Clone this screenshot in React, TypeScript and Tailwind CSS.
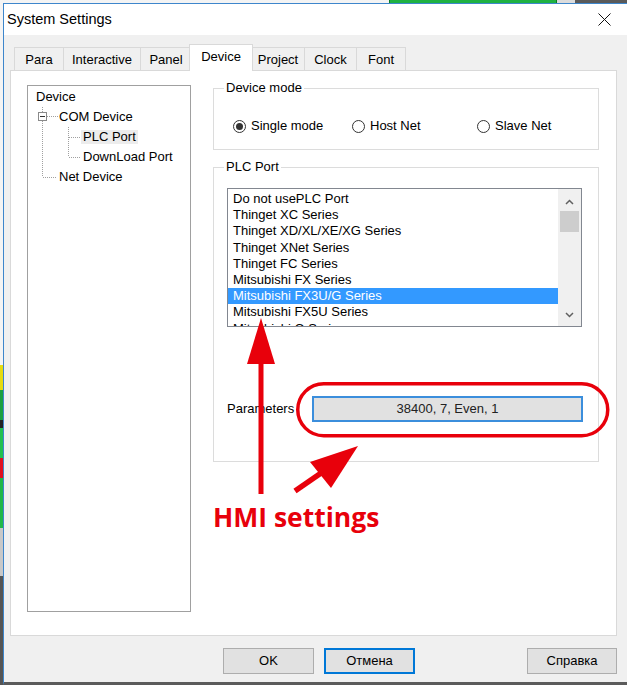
import React from "react";

const items = [
  "Do not usePLC Port",
  "Thinget XC Series",
  "Thinget XD/XL/XE/XG Series",
  "Thinget XNet Series",
  "Thinget FC Series",
  "Mitsubishi FX Series",
  "Mitsubishi FX3U/G Series",
  "Mitsubishi FX5U Series",
  "Mitsubishi Q Series",
];

function Radio({ checked, label, w }: { checked?: boolean; label: string; w: string }) {
  return (
    <div className={`flex items-center gap-[5px] ${w}`}>
      <span className="w-[13px] h-[13px] rounded-full border border-[#333] bg-white flex items-center justify-center shrink-0">
        {checked && <span className="w-[7px] h-[7px] rounded-full bg-[#333]" />}
      </span>
      <span className="leading-[16px]">{label}</span>
    </div>
  );
}

function Dots({ w, segs }: { w: number; segs: Array<[number, number, number, number]> }) {
  return (
    <svg width={w} height={20} className="shrink-0" shapeRendering="crispEdges">
      {segs.map((s, i) => (
        <line key={i} x1={s[0]} y1={s[1]} x2={s[2]} y2={s[3]} stroke="#a0a0a0" strokeWidth={1} strokeDasharray="1 1" />
      ))}
    </svg>
  );
}

export default function App() {
  return (
    <div className="relative w-[627px] h-[685px] overflow-hidden flex flex-col bg-[#f0f0f0] text-[13px] text-black font-['Liberation_Sans','Arial',sans-serif]">
      {/* desktop strip at top */}
      <div className="flex h-[3px] shrink-0">
        <div className="w-[389px] bg-[#f4f4f4]" />
        <div className="w-[168px] bg-[#1fb141] border-x border-[#0a7a20]" />
        <div className="w-[18px] bg-[#dcdcdc]" />
        <div className="flex-1 bg-[#5a5a5a]" />
      </div>
      <div className="flex flex-1 min-h-0">
        {/* desktop strip at left */}
        <div className="w-[3px] flex flex-col shrink-0">
          <div className="h-[362px] bg-[#f4f4f4]" />
          <div className="h-[25px] bg-[#e6dc10]" />
          <div className="h-[30px] bg-[#1aa040]" />
          <div className="h-[8px] bg-[#222]" />
          <div className="h-[30px] bg-[#22c050]" />
          <div className="h-[20px] bg-[#e01020]" />
          <div className="h-[50px] bg-[#20b84a]" />
          <div className="h-[48px] bg-[#c8c8c8]" />
          <div className="flex-1 bg-[#555]" />
        </div>
        {/* window */}
        <div className="flex-1 flex flex-col border-l border-t border-[#3d86cc] border-b-[3px] border-b-[#5b5b5b] bg-[#f0f0f0]">
          <div className="h-[31px] shrink-0 bg-white flex items-center pl-[3px] text-[14.5px]">
            <span>System Settings</span>
            <svg width="13" height="13" className="ml-auto mr-[16px]" viewBox="0 0 13 13">
              <path d="M0.5 0.5 L12.5 12.5 M12.5 0.5 L0.5 12.5" stroke="#111" strokeWidth="1" fill="none" />
            </svg>
          </div>
          <div className="flex-1 flex flex-col pt-[9px] pl-[6px]">
            {/* tabs */}
            <div className="h-[26px] flex items-end pl-[4px]">
              {[
                ["Para", "w-[50px]"],
                ["Interactive", "w-[78px]"],
                ["Panel", "w-[52px]"],
              ].map(([t, w]) => (
                <div key={t} className={`${w} h-[23px] -mr-px border-t border-x border-[#d9d9d9] bg-[#f0f0f0] flex items-center justify-center leading-none`}>
                  {t}
                </div>
              ))}
              <div className="relative z-10 w-[64px] h-[27px] -mx-[2px] -mb-px border-t border-x border-[#d9d9d9] bg-white flex items-start justify-center pt-[5px] leading-none">
                Device
              </div>
              {[
                ["Project", "w-[54px]"],
                ["Clock", "w-[53px]"],
                ["Font", "w-[50px]"],
              ].map(([t, w]) => (
                <div key={t} className={`${w} h-[23px] -mr-px border-t border-x border-[#d9d9d9] bg-[#f0f0f0] flex items-center justify-center leading-none`}>
                  {t}
                </div>
              ))}
            </div>
            {/* panel */}
            <div className="w-[607px] h-[566px] border border-[#d9d9d9] bg-white flex items-start">
              {/* tree */}
              <div className="ml-[16px] mt-[14px] w-[164px] h-[527px] border border-[#a0a0a0] pt-[1px] flex flex-col shrink-0">
                <div className="h-[20px] flex items-center pl-[8px]">Device</div>
                <div className="h-[20px] flex items-center">
                  <svg width={31} height={20} className="shrink-0" shapeRendering="crispEdges">
                    <line x1={14.5} y1={0} x2={14.5} y2={5} stroke="#a0a0a0" strokeDasharray="1 1" />
                    <rect x={10.5} y={5.5} width={8} height={8} fill="white" stroke="#8a8a8a" />
                    <line x1={12} y1={9.5} x2={17} y2={9.5} stroke="#333" />
                    <line x1={14.5} y1={14} x2={14.5} y2={20} stroke="#a0a0a0" strokeDasharray="1 1" />
                    <line x1={19} y1={9.5} x2={30} y2={9.5} stroke="#a0a0a0" strokeDasharray="1 1" />
                  </svg>
                  <span>COM Device</span>
                </div>
                <div className="h-[20px] flex items-center">
                  <Dots
                    w={53}
                    segs={[
                      [14.5, 0, 14.5, 20],
                      [40.5, 0, 40.5, 20],
                      [41, 10.5, 52, 10.5],
                    ]}
                  />
                  <span className="bg-[#ececec] px-[2px] leading-[14px]">PLC Port</span>
                </div>
                <div className="h-[20px] flex items-center">
                  <Dots
                    w={55}
                    segs={[
                      [14.5, 0, 14.5, 20],
                      [40.5, 0, 40.5, 10],
                      [41, 10.5, 53, 10.5],
                    ]}
                  />
                  <span>DownLoad Port</span>
                </div>
                <div className="h-[20px] flex items-center">
                  <Dots
                    w={31}
                    segs={[
                      [14.5, 0, 14.5, 10],
                      [15, 10.5, 29, 10.5],
                    ]}
                  />
                  <span>Net Device</span>
                </div>
              </div>
              {/* right column */}
              <div className="ml-[22px] w-[386px] flex flex-col shrink-0">
                <fieldset className="mt-[9px] h-[70px] border border-[#dcdcdc]">
                  <legend className="ml-[10px] px-[2px] leading-[16px]">Device mode</legend>
                  <div className="mt-[22px] h-[16px] flex items-center pl-[19px]">
                    <Radio checked label="Single mode" w="w-[119px]" />
                    <Radio label="Host Net" w="w-[125px]" />
                    <Radio label="Slave Net" w="w-[100px]" />
                  </div>
                </fieldset>
                <fieldset className="mt-[9px] h-[303px] border border-[#dcdcdc]">
                  <legend className="ml-[10px] px-[2px] leading-[16px]">PLC Port</legend>
                  <div className="mt-[13px] ml-[13px] w-[355px] h-[139px] border border-[#828790] flex overflow-hidden">
                    <div className="w-[330px] pt-[2px] flex flex-col overflow-hidden">
                      {items.map((t, i) => (
                        <div
                          key={t}
                          className={`h-[16.2px] leading-[16.2px] px-[5px] whitespace-nowrap shrink-0 ${
                            i === 6 ? "bg-[#3399ff] text-white" : ""
                          }`}
                        >
                          {t}
                        </div>
                      ))}
                    </div>
                    <div className="w-[23px] bg-[#f0f0f0] flex flex-col">
                      <div className="h-[22px] flex items-center justify-center pt-[3px]">
                        <svg width="9" height="6" viewBox="0 0 9 6">
                          <path d="M1 5 L4.5 1.5 L8 5" stroke="#606060" strokeWidth="1.5" fill="none" />
                        </svg>
                      </div>
                      <div className="h-[21px] mx-[2px] bg-[#cdcdcd]" />
                      <div className="flex-1" />
                      <div className="h-[22px] flex items-center justify-center">
                        <svg width="9" height="6" viewBox="0 0 9 6">
                          <path d="M1 1 L4.5 4.5 L8 1" stroke="#606060" strokeWidth="1.5" fill="none" />
                        </svg>
                      </div>
                    </div>
                  </div>
                  <div className="mt-[69px] ml-[13px] flex items-center">
                    <span className="w-[85px]">Parameters</span>
                    <div className="w-[271px] h-[26px] border-2 border-[#3b8edc] bg-[#e1e1e1] flex items-center justify-center text-[#222]">
                      38400, 7, Even, 1
                    </div>
                  </div>
                </fieldset>
              </div>
            </div>
            {/* buttons */}
            <div className="mt-[12px] flex items-start pr-[10px]">
              <div className="ml-[213px] w-[91px] h-[26px] border border-[#adadad] bg-[#e1e1e1] flex items-center justify-center">
                OK
              </div>
              <div className="ml-[10px] w-[91px] h-[26px] border-2 border-[#0078d7] bg-[#e1e1e1] flex items-center justify-center">
                Отмена
              </div>
              <div className="ml-auto w-[90px] h-[26px] border border-[#adadad] bg-[#e1e1e1] flex items-center justify-center">
                Справка
              </div>
            </div>
          </div>
        </div>
      </div>

      {/* annotations */}
      <svg className="absolute inset-0 pointer-events-none" width="627" height="685" viewBox="0 0 627 685">
        <rect x="297.75" y="383.75" width="310" height="52" rx="26" fill="none" stroke="#e8000b" strokeWidth="3.5" />
        <rect x="258.5" y="356" width="5" height="138" fill="#e8000b" />
        <polygon points="261,318 247,364 275,364" fill="#e8000b" />
        <line x1="295" y1="491" x2="324" y2="471" stroke="#e8000b" strokeWidth="5.5" />
        <polygon points="358,446 310,462 331,488" fill="#e8000b" />
      </svg>
      <div className="absolute left-[213px] top-[504px] text-[26.5px] leading-none font-bold text-[#e8000b] font-['Open_Sans',sans-serif] whitespace-nowrap">
        HMI settings
      </div>
    </div>
  );
}
